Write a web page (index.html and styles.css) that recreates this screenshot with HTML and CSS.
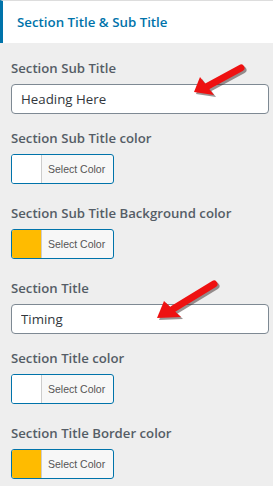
FILE: index.html
```html
<!DOCTYPE html>
<html>
<head>
  <title>Section Title &amp; Sub Title</title>
  <link rel="stylesheet" href="styles.css">
</head>
<body>
  <div class="panel">
    <div class="panelHead">Section Title &amp; Sub Title</div>
    <div class="panelBody">
      <div class="field">
        <label class="fieldLabel">Section Sub Title</label>
        <input class="textInput" type="text" value="Heading Here">
      </div>
      <div class="field colorField">
        <label class="fieldLabel">Section Sub Title color</label>
        <button class="colorBtn"><span class="swatch"></span><span class="colorText">Select Color</span></button>
      </div>
      <div class="field colorField">
        <label class="fieldLabel">Section Sub Title Background color</label>
        <button class="colorBtn"><span class="swatch yellow"></span><span class="colorText">Select Color</span></button>
      </div>
      <div class="field">
        <label class="fieldLabel">Section Title</label>
        <input class="textInput" type="text" value="Timing">
      </div>
      <div class="field colorField">
        <label class="fieldLabel">Section Title color</label>
        <button class="colorBtn"><span class="swatch"></span><span class="colorText">Select Color</span></button>
      </div>
      <div class="field colorField">
        <label class="fieldLabel">Section Title Border color</label>
        <button class="colorBtn"><span class="swatch yellow"></span><span class="colorText">Select Color</span></button>
      </div>
    </div>
  </div>

  <!-- red pointer arrows drawn over the form -->
  <svg class="pointer pointerOne" width="60" height="42" viewBox="0 0 60 42">
    <g transform="translate(2,2)" fill="#3a2a2a" opacity=".5">
      <line x1="51" y1="12" x2="16" y2="31" stroke="#3a2a2a" stroke-width="7" stroke-linecap="round"/>
      <polygon points="4,36 10,21 24,39"/>
    </g>
    <line x1="51" y1="12" x2="16" y2="31" stroke="#ee1111" stroke-width="7" stroke-linecap="round"/>
    <polygon points="4,36 10,21 24,39" fill="#ee1111"/>
  </svg>
  <svg class="pointer pointerTwo" width="70" height="48" viewBox="0 0 70 48">
    <g transform="translate(2,2)" fill="#3a2a2a" opacity=".5">
      <line x1="61" y1="9" x2="20" y2="34" stroke="#3a2a2a" stroke-width="7" stroke-linecap="round"/>
      <polygon points="4,43 11,26 28,42"/>
    </g>
    <line x1="61" y1="9" x2="20" y2="34" stroke="#ee1111" stroke-width="7" stroke-linecap="round"/>
    <polygon points="4,43 11,26 28,42" fill="#ee1111"/>
  </svg>
</body>
</html>
```
FILE: styles.css
```css
* {
  box-sizing: border-box;
}
body {
  margin: 0;
  background: #eeeeee;
  font-family: "Open Sans", "Noto Sans", sans-serif;
  position: relative;
}
.panelHead {
  height: 43px;
  border-top: 1px solid #dddddd;
  border-left: 3px solid #0073aa;
  background: #ffffff;
  color: #0073aa;
  font-size: 13.3px;
  font-weight: 600;
  line-height: 42px;
  padding-left: 14px;
}
.panelBody {
  padding: 17px 4px 0 11px;
}
.field {
  display: flex;
  flex-direction: column;
  align-items: flex-start;
  margin-bottom: 16px;
}
.colorField {
  margin-bottom: 21px;
}
.fieldLabel {
  display: block;
  height: 16px;
  line-height: 16px;
  font-size: 13.2px;
  font-weight: 600;
  color: #555d66;
  margin-bottom: 8px;
}
.textInput {
  width: 100%;
  height: 30px;
  border: 1px solid #7e8993;
  border-radius: 4px;
  background: #ffffff;
  padding: 0 9px;
  font-family: inherit;
  font-size: 13.3px;
  color: #32373c;
  outline: none;
}
.colorBtn {
  display: flex;
  width: 103px;
  height: 30px;
  padding: 0;
  border: 1px solid #0073aa;
  border-radius: 3px;
  background: #f7f7f7;
  overflow: hidden;
  cursor: pointer;
}
.swatch {
  width: 30px;
  height: 100%;
  background: #ffffff;
  border-right: 1px solid #cccccc;
}
.swatch.yellow {
  background: #ffbb00;
}
.colorText {
  flex-grow: 1;
  padding-left: 6px;
  line-height: 28px;
  font-family: inherit;
  font-size: 10.5px;
  color: #555555;
  text-align: left;
}
.pointer {
  position: absolute;
}
.pointerOne {
  left: 190px;
  top: 56px;
}
.pointerTwo {
  left: 153px;
  top: 275px;
}
```
